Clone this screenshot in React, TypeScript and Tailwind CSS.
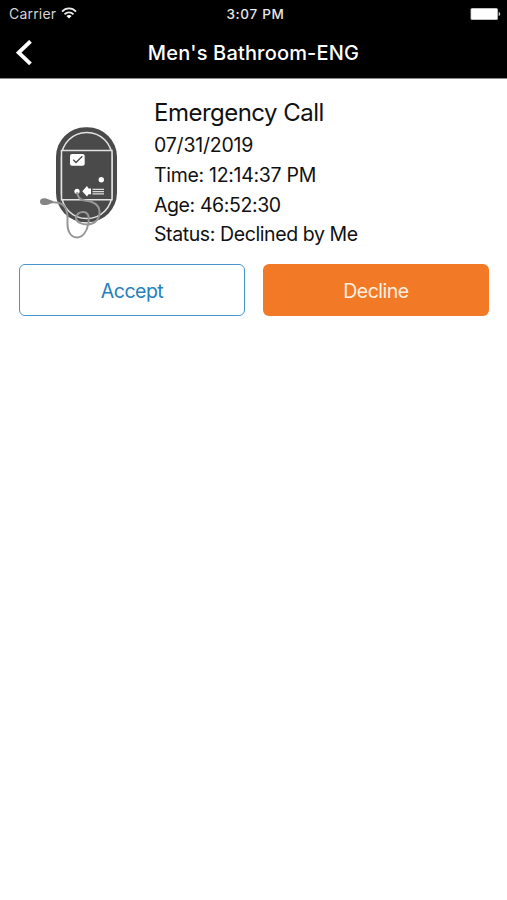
function StatusBar() {
  return (
    <div className="grid h-7 grid-cols-3 items-center pl-[9px] pr-[6px]">
      <div className="flex items-center gap-[5px]">
        <span className="text-[14px] leading-none tracking-[0.2px] text-[#d4d4d4]">Carrier</span>
        <svg className="mb-[2px] h-3 w-4" viewBox="0 0 16 12" fill="none" stroke="#e8e8e8" strokeWidth="1.8">
          <path d="M1 4.6C5 .4 11 .4 15 4.6" />
          <path d="M3.5 7.3C6 4.6 10 4.6 12.5 7.3" />
          <path d="M8 11.6 5.4 9c1.4-1.4 3.8-1.4 5.2 0Z" fill="#fff" stroke="none" />
        </svg>
      </div>
      <span className="pl-px pt-px text-center text-[13.5px] font-medium leading-none tracking-[0.7px] text-[#e8e8e8]">
        3:07 PM
      </span>
      <svg className="h-3 w-[31px] justify-self-end" viewBox="0 0 31 12">
        <rect x=".5" y="0" width="27.5" height="12" rx="1.5" fill="#aaa" />
        <rect x="1.2" y=".8" width="26" height="10.4" rx="1" fill="#fff" />
        <path d="M28.7 4c2 .5 2 3.5 0 4Z" fill="#ccc" />
      </svg>
    </div>
  );
}

function CallStation() {
  return (
    <svg className="h-[116px] w-[82px]" viewBox="0 0 82 116" fill="none">
      <rect x="18" y="2.3" width="61" height="95" rx="29.5" fill="#4a4a4a" />
      <rect x="23.5" y="7.5" width="50.5" height="86" rx="25" stroke="#e4e4e4" strokeWidth="1.5" />
      <path d="M23.5 25.5H74V74.7H23.5Z" fill="#4a4a4a" stroke="#e4e4e4" strokeWidth="1.5" />
      <rect x="32" y="29" width="14.7" height="11.7" rx="2" fill="#fff" />
      <path d="m35.3 34.8 2.7 2.7 6.3-6.2" stroke="#4a4a4a" strokeWidth="1.4" />
      <circle cx="63.3" cy="54.7" r="2.7" fill="#fff" />
      <circle cx="39" cy="66.3" r="2.6" fill="#fff" />
      <path d="m44.3 66.3 4.7-5.3 1.5 2.4H53v5.9h-2.5L49 71.6Z" fill="#fff" />
      <path d="M54.5 64.3h11.5M54.5 66.6h11.5M54.5 68.9h11.5" stroke="#ddd" strokeWidth="1.3" />
      {/* Pull cord */}
      <path
        d="M39 67C40 73 42 75 47 75.5C55 76 61 80 61.5 86C62 94 57 98.5 51 99.5C44 100 38 97 38 93C38 89 42 86.5 46 87C51 88 51 92 50.5 98C49 106 45 112.5 39 112.5C32 112.5 29 105 29.5 96C30 86 28 79 20 77.7L13 77"
        stroke="#969696"
        strokeWidth="2"
      />
      <path d="M2 76.5C2 73 6 73 9 73.7C12 74.5 13 75.5 15 76V78C12 78.3 11 79.8 8 80C4 80 2 79.5 2 76.5Z" fill="#858585" />
    </svg>
  );
}

export default function App() {
  return (
    <div className="min-h-screen bg-white font-['Inter',sans-serif] text-[#111]">
      <header className="h-[79px] border-b border-[#8a8a8a] bg-black text-white">
        <StatusBar />
        <div className="grid h-[49px] grid-cols-[50px_1fr_50px] items-center">
          <button aria-label="Back" className="pl-4">
            <svg className="h-[26px] w-4" viewBox="0 0 16 26" fill="none" stroke="white" strokeWidth="3.9">
              <path d="M14.5 1.3 2.7 12.6l11.8 11.2" />
            </svg>
          </button>
          <h1 className="whitespace-nowrap text-center text-[20px] font-[550] leading-none tracking-[0.17px]">
            Men's Bathroom-ENG
          </h1>
        </div>
      </header>

      <main className="pt-[17px]">
        <section className="flex">
          <div className="w-[154px] pl-[38px] pt-[29px]">
            <CallStation />
          </div>
          <div className="whitespace-nowrap text-[19.5px] leading-[29.8px] tracking-[-0.4px]">
            <h2 className="mb-[2px] text-[24px] leading-[33px] tracking-[-0.52px]">Emergency Call</h2>
            <p className="tracking-[-0.2px]">07/31/2019</p>
            <p className="tracking-[-0.3px]">Time: 12:14:37 PM</p>
            <p>Age: 46:52:30</p>
            <p>Status: Declined by Me</p>
          </div>
        </section>
        <div className="mt-[14px] grid grid-cols-2 gap-[18px] pl-[19px] pr-[18px] text-[19.5px] tracking-[-0.5px]">
          <button className="h-[52px] rounded-[6px] border-[1.5px] border-[#4594cb] pt-[2px] text-[#2580bb]">Accept</button>
          <button className="h-[52px] rounded-[6px] bg-[#f27a26] pt-[2px] text-[#fff0e2]">Decline</button>
        </div>
      </main>
    </div>
  );
}
